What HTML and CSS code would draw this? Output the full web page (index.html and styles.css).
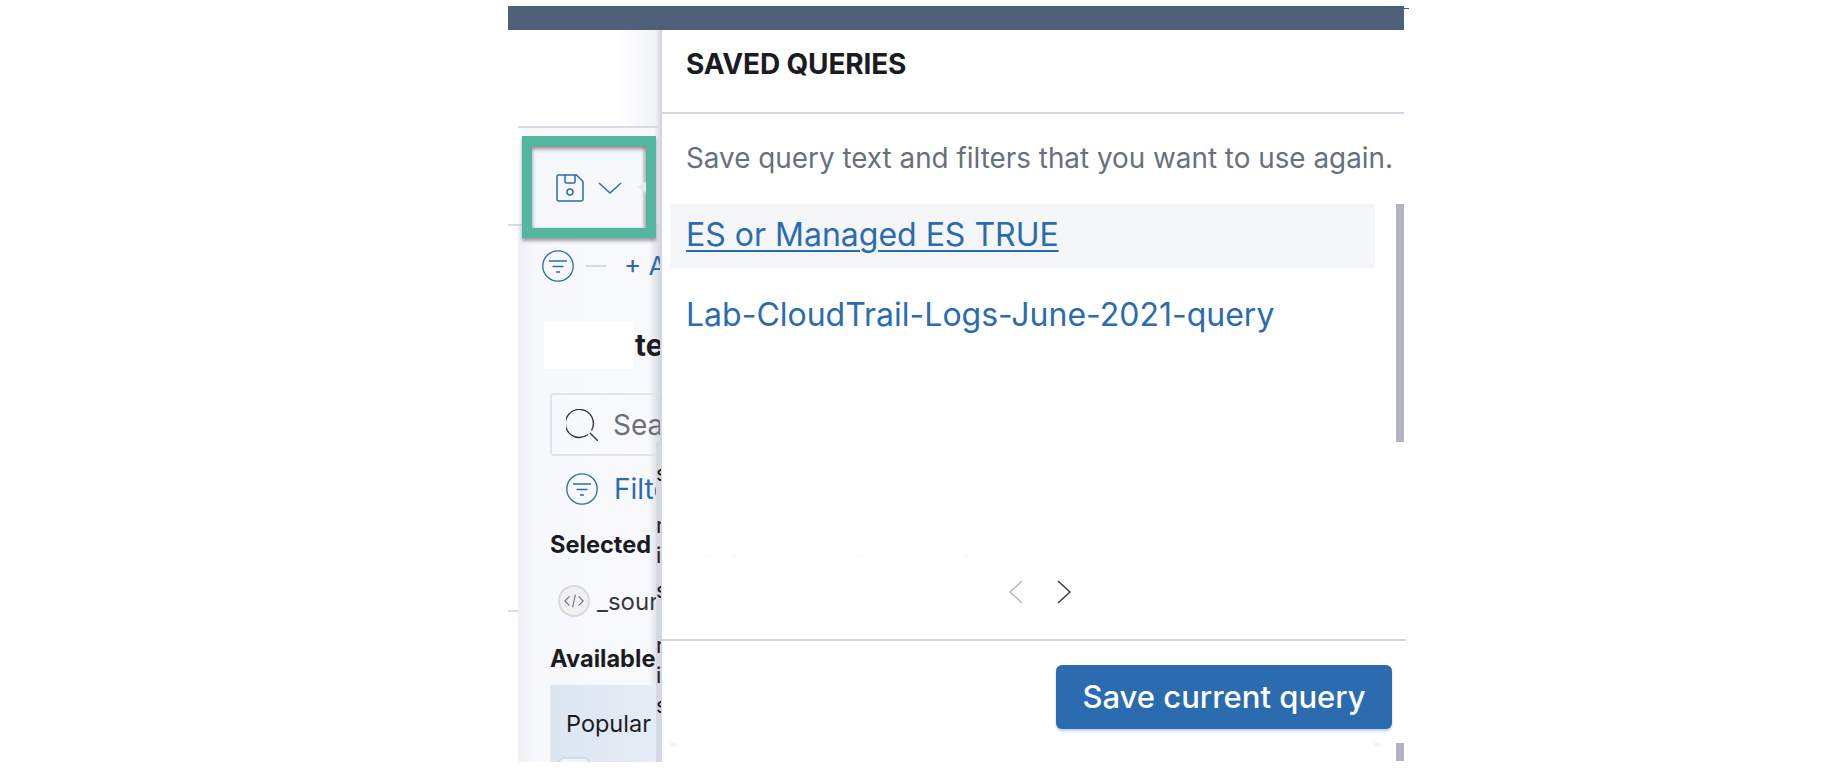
FILE: index.html
```html
<!DOCTYPE html>
<html lang="en">
<head>
<meta charset="utf-8">
<title>Saved queries</title>
<link rel="stylesheet" href="styles.css">
</head>
<body>
<div class="page">
  <div class="topbar"><span class="tick"></span></div>
  <div class="workspace">
    <aside class="side">
      <div class="side-head"></div>
      <div class="toolbar"></div>
      <div class="pane">
        <div class="filter-row">
          <svg class="icon-32" viewBox="0 0 32 32" fill="none" stroke="#2b6bb0" stroke-width="1.3"><circle cx="16" cy="16" r="15.2"/><path d="M7 11h18M10.5 16.5h11M14 22h4" stroke-width="1.6"/></svg>
          <span class="dash"></span>
          <span class="add">+ Add filter</span>
        </div>
        <div class="title-row"><span class="mask"></span><span class="title">tern</span></div>
        <div class="search">
          <svg class="icon-32" viewBox="0 0 32 32" fill="none" stroke="#343741" stroke-width="1.4"><path d="M22 25.500a14 14 0 1 1 3.500-4"/><path d="M24 24l8 8"/></svg>
          <span class="search-text">Search</span>
        </div>
        <div class="filter-link">
          <svg class="icon-32" viewBox="0 0 32 32" fill="none" stroke="#2b6bb0" stroke-width="1.3"><circle cx="16" cy="16" r="15.2"/><path d="M7 11h18M10.5 16.5h11M14 22h4" stroke-width="1.6"/></svg>
          <span>Filter</span>
        </div>
        <div class="label selected">Selected</div>
        <div class="field">
          <span class="field-icon"><svg viewBox="0 0 24 24" fill="none" stroke="#69707d" stroke-width="1.2"><path d="M7 7l-5 5 5 5M17 7l5 5-5 5M13.5 5l-3 14"/></svg></span>
          <span>_source</span>
        </div>
        <div class="label available">Available</div>
        <div class="popular"><span>Popular</span><span class="chip"></span></div>
      </div>
      <span class="gutter-line"></span>
      <div class="strip">
        <span class="s0">s</span><span class="s1">m</span><span class="s2">i</span><span class="s3">s</span><span class="s4">m</span><span class="s5">i</span><span class="s6">s</span>
      </div>
      <div class="callout">
        <svg class="save" viewBox="0 0 28 28" fill="none" stroke="#2b6bb0" stroke-width="1.5"><path d="M2.5 1h18L27 7.5V25a2 2 0 0 1-2 2H3a2 2 0 0 1-2-2V2.5A1.5 1.5 0 0 1 2.500 1z"/><path d="M9 1v6.500a1.500 1.500 0 0 0 1.500 1.500h7A1.500 1.500 0 0 0 19 7.500V1"/><circle cx="14" cy="18" r="3"/></svg>
        <svg class="caret" viewBox="0 0 24 12" fill="none" stroke="#2b6bb0" stroke-width="1.500"><path d="M1 1l11 10L23 1"/></svg>
        <span class="arrow"></span>
      </div>
    </aside>
    <section class="panel">
      <h2 class="panel-title">SAVED QUERIES</h2>
      <p class="panel-desc">Save query text and filters that you want to use again.</p>
      <div class="list-area">
        <ul class="list">
          <li class="item active"><a href="#">ES or Managed ES TRUE</a></li>
          <li class="item"><a href="#">Lab-CloudTrail-Logs-June-2021-query</a></li>
        </ul>
        <span class="thumb"></span>
      </div>
      <div class="pager">
        <span class="specks"></span>
        <svg viewBox="0 0 14 24" fill="none" stroke="#b5b7bc" stroke-width="1.500"><path d="M13 1L1 12l12 11"/></svg>
        <svg viewBox="0 0 14 24" fill="none" stroke="#343741" stroke-width="1.500"><path d="M1 1l12 11L1 23"/></svg>
      </div>
      <div class="footer">
        <button class="save-btn" type="button">Save current query</button>
        <span class="speck-l"></span>
        <span class="speck-r"></span>
        <span class="thumb-end"></span>
      </div>
    </section>
  </div>
</div>
</body>
</html>
```

FILE: styles.css
```css
* { box-sizing: border-box; }
html, body { margin: 0; padding: 0; background: #fff; }
body { width: 1842px; height: 772px; overflow: hidden; font-family: Inter, "Liberation Sans", sans-serif; }
.page { width: 896px; margin-left: 508px; padding-top: 6px; }
.topbar { height: 24px; width: 896px; background: #4f6079; position: relative; }
.tick { position: absolute; left: 896px; top: 2px; width: 5px; height: 1px; background: #4f6079; }
.workspace { display: flex; height: 732px; width: 896px; }

/* left column */
.side { width: 152px; flex: none; position: relative; height: 732px; }
.side-head { height: 98px; margin-left: 10px; border-bottom: 2px solid #d8dbe4; background: linear-gradient(90deg, #fff 70%, #f1f2f6 97%, #d9dbe3 100%); }
.toolbar { height: 98px; background: linear-gradient(90deg, #fff 6%, #f6f8fb 12%, #f6f8fb 96%, #d9dbe3 100%); border-bottom: 2px solid #d8dbe4; }
.pane { margin-left: 10px; height: 536px; overflow: hidden; background: linear-gradient(90deg, #eef0f5 0, #f7f8fb 12%, #f8f9fc 92%, #d5d8e1 100%); }
.icon-32 { width: 32px; height: 32px; flex: none; display: block; }
.filter-row { display: flex; align-items: center; padding: 23px 0 0 24px; height: 56px; white-space: nowrap; }
.dash { width: 20px; height: 2px; background: #d3dae6; margin: 0 18px 0 12px; flex: none; }
.add { color: #2b6bb0; font-size: 26px; font-weight: 400; }
.title-row { display: flex; align-items: center; height: 48px; margin: 39px 0 0 26px; white-space: nowrap; }
.mask { width: 90px; height: 48px; background: #fff; flex: none; }
.title { font-size: 30px; font-weight: 700; color: #1a1c21; margin-left: 1px; }
.search { display: flex; align-items: center; gap: 15px; margin: 24px 0 0 32px; width: 300px; height: 63px; padding-left: 14px; border: 2px solid #dfe3ec; border-radius: 4px; color: #69707d; font-size: 28px; white-space: nowrap; }
.filter-link { display: flex; align-items: center; gap: 16px; margin: 17px 0 0 48px; color: #2b6bb0; font-size: 28px; font-weight: 400; height: 32px; white-space: nowrap; }
.label { font-size: 23.600px; font-weight: 700; color: #1a1c21; margin-left: 32px; line-height: 28px; white-space: nowrap; }
.selected { margin-top: 26px; }
.field { display: flex; align-items: center; gap: 7px; margin: 26px 0 0 40px; height: 32px; font-size: 24px; color: #343741; white-space: nowrap; }
.field-icon { width: 32px; height: 32px; flex: none; border-radius: 50%; background: #f1f1f1; border: 2px solid #d9d9d9; display: flex; align-items: center; justify-content: center; }
.field-icon svg { width: 22px; height: 22px; }
.available { margin-top: 28px; }
.popular { margin: 12px 0 0 32px; height: 80px; padding: 24px 0 0 16px; background: linear-gradient(90deg, #dce6f1, #e5edf6); color: #1a1c21; font-size: 23.500px; line-height: 30px; position: relative; }
.chip { position: absolute; left: 8px; top: 72px; width: 32px; height: 20px; border: 2px solid #d3dae6; border-radius: 6px; background: #f1f4f8; }
.gutter-line { position: absolute; left: 0; top: 580px; width: 10px; height: 2px; background: #d8dbe4; }
.strip { position: absolute; left: 148px; top: 412px; width: 5px; height: 320px; background: #d5d8e1; overflow: hidden; color: #1a1c21; font-size: 22px; line-height: 26px; }
.strip span { position: absolute; left: 0; }
.s0 { top: 18px; } .s1 { top: 70px; } .s2 { top: 100px; } .s3 { top: 135px; } .s4 { top: 190px; } .s5 { top: 220px; } .s6 { top: 250px; }
.callout { position: absolute; left: 14px; top: 106px; width: 134px; height: 102px; border: 10px solid #52b79e; box-shadow: 0 3px 3px rgba(60,60,70,.45), inset 0 3px 4px rgba(60,60,70,.55), inset -3px 0 3px rgba(120,120,130,.25); background: #f7f8fb; display: flex; align-items: center; padding: 2px 0 0 24px; }
.save { width: 28px; height: 28px; flex: none; }
.caret { width: 24px; height: 12px; flex: none; margin-left: 14px; }
.arrow { position: absolute; right: 0; top: 35px; width: 8px; height: 12px; clip-path: polygon(100% 0, 0 50%, 100% 100%); background: #e6e8ee; }

/* right panel */
.panel { width: 744px; flex: none; height: 732px; display: flex; flex-direction: column; border-left: 2px solid #d3d6e0; background: #fff; }
.panel-title { margin: 0; height: 84px; padding: 18px 0 0 24px; border-bottom: 2px solid #d3d6e0; font-size: 28px; font-weight: 700; line-height: 32px; letter-spacing: -0.15px; color: #1a1c21; white-space: nowrap; }
.panel-desc { margin: 0; height: 90px; padding: 28px 0 0 24px; font-size: 27.850px; line-height: 32px; color: #69707d; white-space: nowrap; }
.list-area { display: flex; height: 351px; }
.list { list-style: none; margin: 0 0 0 8px; padding: 0; width: 705px; flex: none; }
.item { height: 64px; padding-left: 16px; font-size: 32px; line-height: 62px; white-space: nowrap; margin-bottom: 16px; }
.item a { color: #2b6bb0; text-decoration: none; }
.item.active { background: #f4f6f8; }
.item.active a { text-decoration: underline; text-underline-offset: 4px; text-decoration-thickness: 2px; }
.thumb { width: 8px; height: 238px; margin-left: 21px; background: #b2b5c0; flex: none; }
.pager { position: relative; height: 86px; display: flex; justify-content: center; align-items: flex-start; gap: 34px; padding: 25px 0 0 12px; border-bottom: 2px solid #d3d6e0; width: 744px; margin-right: -2px; flex: none; }
.pager svg { width: 14px; height: 24px; display: block; }
.specks { position: absolute; left: 44px; top: 0; width: 2px; height: 1px; background: #eceef2; box-shadow: 27px 0 #eceef2, 152px 0 #eceef2, 259px 0 #eceef2; }
.footer { position: relative; flex: 1; display: flex; justify-content: flex-end; align-items: flex-start; padding: 24px 12px 0 0; }
.save-btn { width: 336px; height: 64px; border: 0; border-radius: 6px; background: #2b6bb0; color: #fff; font: 500 31px/64px Inter, "Liberation Sans", sans-serif; padding: 0; box-shadow: 0 2px 3px rgba(43,107,176,.35); }
.speck-l, .speck-r { position: absolute; top: 102px; width: 6px; height: 4px; background: #f2f3f6; }
.speck-l { left: 8px; }
.speck-r { right: 24px; }
.thumb-end { position: absolute; right: 0; top: 102px; width: 8px; height: 18px; background: #b2b5c0; }
```
